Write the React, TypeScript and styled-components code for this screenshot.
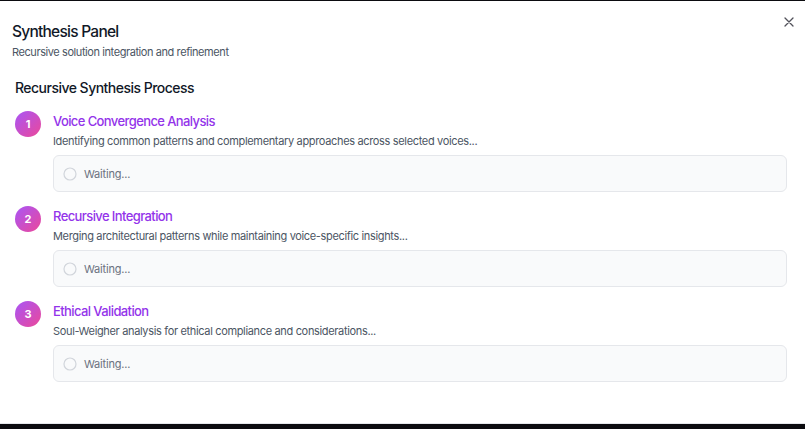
import React from "react";
import styled, { createGlobalStyle } from "styled-components";

const Global = createGlobalStyle`
  html, body { margin: 0; padding: 0; background: #0b0b0f; }
  body { font-family: "Segoe UI", Inter, "Noto Sans", sans-serif; }
  * { box-sizing: border-box; }
`;

const Backdrop = styled.div`
  width: 805px;
  height: 429px;
  padding-top: 1px;
  background: #0b0b0f;
  overflow: hidden;
`;

const Dialog = styled.div`
  position: relative;
  height: 423px;
  background: #ffffff;
  border-bottom: 1px solid #e5e7eb;
  padding: 19px 18px 0 12px;
  display: flex;
  flex-direction: column;
`;

const Close = styled.button`
  position: absolute;
  top: 14px;
  right: 9px;
  width: 14px;
  height: 14px;
  padding: 0;
  border: 0;
  background: transparent;
  display: flex;
  align-items: center;
  justify-content: center;
  color: #52525b;
`;

const Title = styled.h2`
  margin: 0;
  font-size: 15.5px;
  line-height: 24px;
  font-weight: 500;
  letter-spacing: -0.75px;
  color: #111827;
`;

const Subtitle = styled.p`
  margin: 0;
  font-size: 11px;
  line-height: 16px;
  letter-spacing: -0.42px;
  color: #4b5563;
`;

const Section = styled.div`
  margin-top: 18px;
  padding-left: 3px;
  display: flex;
  flex-direction: column;
`;

const SectionTitle = styled.h3`
  margin: 0;
  font-size: 14px;
  line-height: 20px;
  font-weight: 500;
  letter-spacing: -0.52px;
  color: #111827;
`;

const Steps = styled.div`
  margin-top: 13px;
  display: flex;
  flex-direction: column;
  gap: 14px;
`;

const Step = styled.div`
  display: grid;
  grid-template-columns: 26px 1fr;
  column-gap: 12px;
  align-items: start;
`;

const Badge = styled.div`
  width: 26px;
  height: 26px;
  border-radius: 50%;
  background: linear-gradient(135deg, #a855f7, #ec4899);
  color: #fff;
  font-size: 11px;
  font-weight: 700;
  display: flex;
  align-items: center;
  justify-content: center;
`;

const Body = styled.div`
  display: flex;
  flex-direction: column;
  padding-top: 1px;
`;

const StepTitle = styled.div`
  font-size: 13px;
  line-height: 18px;
  font-weight: 500;
  letter-spacing: -0.6px;
  color: #9333ea;
`;

const StepDesc = styled.div`
  margin-top: 3px;
  font-size: 11px;
  line-height: 16px;
  letter-spacing: -0.34px;
  color: #4b5563;
`;

const Status = styled.div`
  margin-top: 6px;
  height: 37px;
  border: 1px solid #e5e7eb;
  border-radius: 6px;
  background: #f9fafb;
  display: flex;
  align-items: center;
  gap: 7px;
  padding-left: 9px;
  font-size: 11px;
  letter-spacing: -0.2px;
  color: #6b7280;
`;

const steps = [
  {
    n: 1,
    title: "Voice Convergence Analysis",
    desc: "Identifying common patterns and complementary approaches across selected voices...",
  },
  {
    n: 2,
    title: "Recursive Integration",
    desc: "Merging architectural patterns while maintaining voice-specific insights...",
  },
  {
    n: 3,
    title: "Ethical Validation",
    desc: "Soul-Weigher analysis for ethical compliance and considerations...",
  },
];

export default function App() {
  return (
    <>
      <Global />
      <Backdrop>
        <Dialog>
          <Close aria-label="Close">
            <svg width="10" height="10" viewBox="0 0 10 10" fill="none" stroke="currentColor" strokeWidth="1.3" strokeLinecap="round">
              <path d="M1 1L9 9M9 1L1 9" />
            </svg>
          </Close>
          <Title>Synthesis Panel</Title>
          <Subtitle>Recursive solution integration and refinement</Subtitle>
          <Section>
            <SectionTitle>Recursive Synthesis Process</SectionTitle>
            <Steps>
              {steps.map((s) => (
                <Step key={s.n}>
                  <Badge>{s.n}</Badge>
                  <Body>
                    <StepTitle>{s.title}</StepTitle>
                    <StepDesc>{s.desc}</StepDesc>
                    <Status>
                      <svg width="14" height="14" viewBox="0 0 14 14" fill="none">
                        <circle cx="7" cy="7" r="6" stroke="#d1d5db" strokeWidth="1.2" />
                      </svg>
                      Waiting...
                    </Status>
                  </Body>
                </Step>
              ))}
            </Steps>
          </Section>
        </Dialog>
      </Backdrop>
    </>
  );
}
